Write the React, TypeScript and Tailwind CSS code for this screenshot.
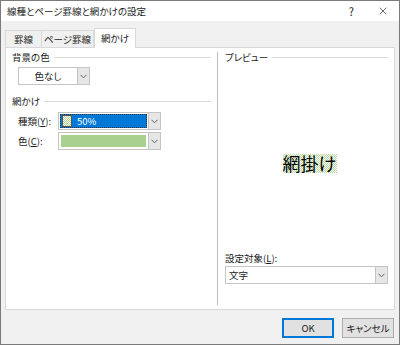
import { X } from 'lucide-react';

function Chevron() {
  return (
    <svg width="7" height="5" viewBox="0 0 7 5" className="text-[#606060]">
      <path d="M0.5 0.8 L3.5 3.8 L6.5 0.8" fill="none" stroke="currentColor" strokeWidth="1" />
    </svg>
  );
}

function ArrowBox() {
  return (
    <div className="w-[12px] self-stretch flex items-center justify-center bg-[#e6e6e6] border-l border-[#c4c4c4]">
      <Chevron />
    </div>
  );
}

function GroupHeader({ label, className = '' }: { label: string; className?: string }) {
  return (
    <div className={`flex items-center h-[14px] ${className}`}>
      <span className="whitespace-nowrap">{label}</span>
      <div className="flex-1 h-px bg-[#dcdcdc] ml-[4px]" />
    </div>
  );
}

export default function App() {
  return (
    <div className="w-[400px] h-[345px] border border-[#7a7a7a] bg-[#f0f0f0] text-[9.5px] leading-[14px] whitespace-nowrap text-[#1a1a1a] [font-feature-settings:'palt'] font-['Noto_Sans_CJK_JP','Liberation_Sans',sans-serif] flex flex-col overflow-hidden">
      {/* title bar */}
      <div className="h-[20px] bg-white flex items-center pl-[6px] pr-[10px]">
        <span>線種とページ罫線と網かけの設定</span>
        <span className="ml-auto text-[11px]">?</span>
        <X className="ml-[23px] w-[12px] h-[12px]" strokeWidth={1.3} />
      </div>

      {/* tabs */}
      <div className="h-[26px] flex items-end pl-[4px]">
        <div className="w-[37px] h-[17px] border border-b-0 border-[#d9d9d9] flex items-center justify-center">罫線</div>
        <div className="w-[52px] h-[17px] border border-b-0 border-l-0 border-[#d9d9d9] flex items-center justify-center">ページ罫線</div>
        <div className="relative z-10 -mb-px w-[42px] h-[20px] bg-white border border-b-0 border-[#d9d9d9] flex items-center justify-center pb-[2px]">網かけ</div>
      </div>

      {/* panel */}
      <div className="mx-[4px] h-[263px] bg-white border border-[#d9d9d9] flex">
        <div className="w-[211px] flex flex-col pl-[6px] pr-[6px] pt-[2px]">
          <GroupHeader label="背景の色" />
          <div className="ml-[6px] mt-[3px] w-[72px] h-[18px] border border-[#c4c4c4] flex">
            <div className="flex-1 flex items-center justify-center">色なし</div>
            <ArrowBox />
          </div>

          <GroupHeader label="網かけ" className="mt-[9px]" />
          <div className="flex items-center mt-[4px] h-[18px]">
            <span className="w-[46px] pl-[6px]">種類(<span className="underline">Y</span>):</span>
            <div className="w-[103px] h-[18px] border border-[#c4c4c4] flex">
              <div className="flex-1 m-px border border-dotted border-[#333] bg-[#0078d7] flex items-center pl-[1px]">
                <div className="w-[10px] h-[12px] border border-[#555] bg-[image:repeating-conic-gradient(#a9d08e_0_25%,#ffffff_0_50%)] bg-[length:2px_2px]" />
                <span className="ml-[5px] text-white">50%</span>
              </div>
              <ArrowBox />
            </div>
          </div>
          <div className="flex items-center mt-[2px] h-[18px]">
            <span className="w-[46px] pl-[6px]">色(<span className="underline">C</span>):</span>
            <div className="w-[103px] h-[18px] border border-[#c4c4c4] flex">
              <div className="flex-1 m-[2px] bg-[#a9d08e]" />
              <ArrowBox />
            </div>
          </div>
        </div>

        <div className="w-px bg-[#bdbdbd] my-[4px]" />

        <div className="flex-1 flex flex-col pl-[7px] pr-[6px] pt-[2px]">
          <GroupHeader label="プレビュー" />
          <div className="flex-1 flex items-center justify-center pt-[12px] pl-[6px]">
            <span className="text-[18px] leading-[19px] text-black [font-feature-settings:normal] bg-[image:repeating-conic-gradient(#b9d9a3_0_25%,#ffffff_0_50%)] bg-[length:2px_2px]">網掛け</span>
          </div>
          <div className="h-[14px] flex items-center">設定対象(<span className="underline">L</span>):</div>
          <div className="mt-px mb-[25px] h-[18px] border border-[#c4c4c4] flex">
            <div className="flex-1 flex items-center pl-[3px]">文字</div>
            <ArrowBox />
          </div>
        </div>
      </div>

      {/* buttons */}
      <div className="flex justify-end gap-[8px] pr-[5px] mt-[8px]">
        <button className="w-[52px] h-[20px] bg-[#e1e1e1] border border-[#0078d7] outline outline-1 outline-[#0078d7] -outline-offset-2">OK</button>
        <button className="w-[52px] h-[20px] bg-[#e1e1e1] border border-[#adadad]">キャンセル</button>
      </div>
    </div>
  );
}
